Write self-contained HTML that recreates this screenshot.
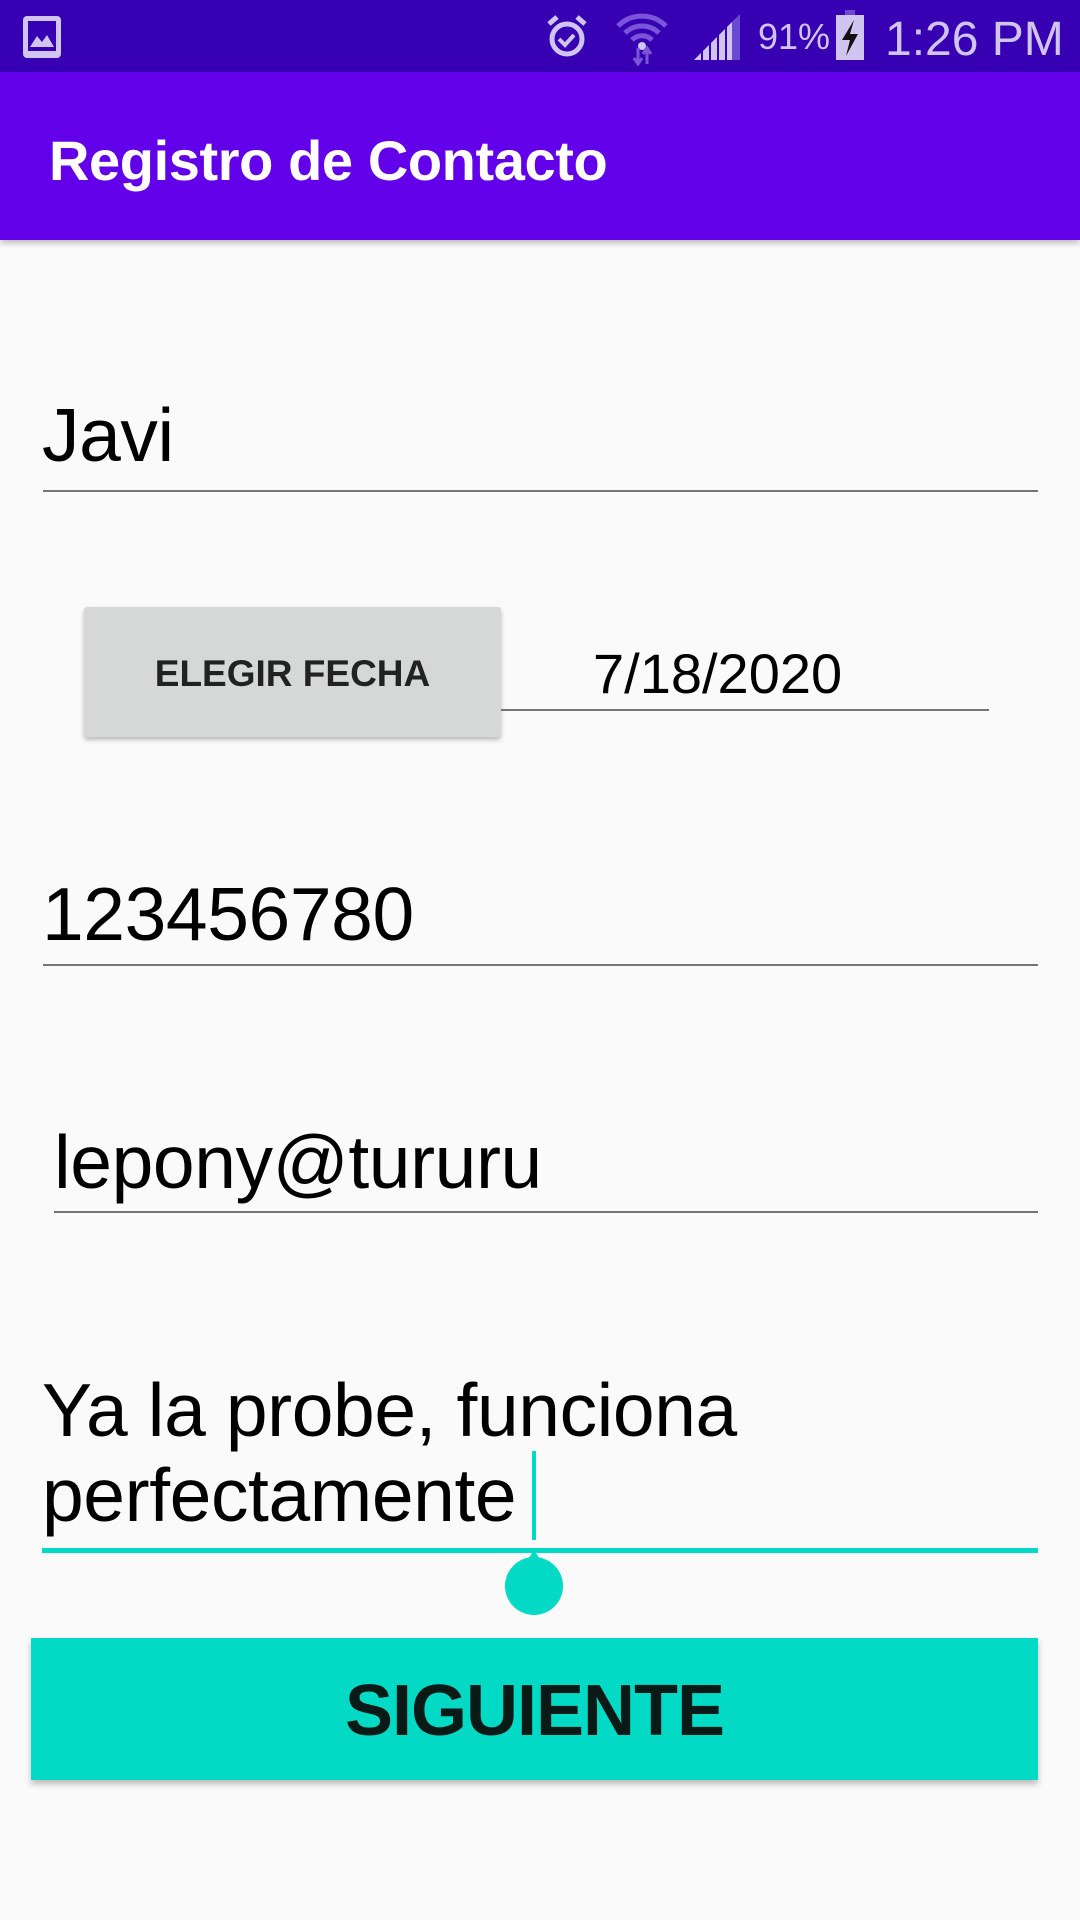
<!DOCTYPE html>
<html><head><meta charset="utf-8"><style>
*{margin:0;padding:0;box-sizing:border-box}
body{width:1080px;height:1920px;background:#fafafa;font-family:"Liberation Sans",sans-serif;position:relative;overflow:hidden}
.a{position:absolute}
.t{position:absolute;white-space:nowrap;color:#000;font-size:75px;line-height:1;letter-spacing:-0.4px}
.ul{position:absolute;height:2px;background:#757575}
</style></head><body>
<div class="a" style="left:0;top:0;width:1080px;height:72px;background:#3700b3"></div>
<svg class="a" style="left:20px;top:14px" width="44" height="46" viewBox="0 0 44 46"><rect x="3" y="2" width="38" height="42" rx="4" fill="#d0c4f0"/><rect x="8" y="7" width="28" height="30" fill="#3700b3"/><path d="M10 33 L17 22 L22 28 L27 21 L34 33Z" fill="#d0c4f0"/></svg>
<svg class="a" style="left:545px;top:12px" width="44" height="50" viewBox="0 0 44 50"><circle cx="22" cy="27" r="15" fill="none" stroke="#d0c4f0" stroke-width="5"/><path d="M14 27l6 6 9-10" fill="none" stroke="#d0c4f0" stroke-width="4"/><path d="M4 12l8-7M40 12l-8-7" stroke="#d0c4f0" stroke-width="5"/></svg>
<svg class="a" style="left:615px;top:8px" width="54" height="58" viewBox="0 0 54 58"><path d="M3 18a34 34 0 0 1 48 0M10 25a24 24 0 0 1 34 0M17 32a14 14 0 0 1 20 0" fill="none" stroke="#7a55d8" stroke-width="5"/><circle cx="27" cy="38" r="4" fill="#d0c4f0"/><path d="M23 40v16M19 50l4 6 4-6M32 56V42M28 46l4-6 4 6" stroke="#7a55d8" stroke-width="3" fill="none"/></svg>
<svg class="a" style="left:692px;top:12px" width="50" height="50" viewBox="0 0 50 50"><path d="M2 48 L48 2 V48Z" fill="#6a4ad0"/><path d="M2 48 L40 10 V48Z" fill="#d0c4f0"/><path d="M10 48V36M18 48V28M26 48V20M34 48V12" stroke="#3700b3" stroke-width="2"/></svg>
<div class="a" style="left:758px;top:16px;font-size:36px;color:#d0c4f0">91%</div>
<svg class="a" style="left:834px;top:10px" width="32" height="52" viewBox="0 0 32 52"><rect x="11" y="0" width="10" height="6" fill="#6a4ad0"/><rect x="2" y="5" width="28" height="45" fill="#d0c4f0"/><path d="M20 10 L8 30 H16 L12 46 L24 24 H16Z" fill="#111"/></svg>
<div class="a" style="left:885px;top:12px;font-size:48px;color:#d0c4f0">1:26 PM</div>
<div class="a" style="left:0;top:72px;width:1080px;height:168px;background:#6200ea;box-shadow:0 3px 6px rgba(0,0,0,.25)"></div>
<div class="a" style="left:49px;top:128px;font-size:56px;color:#fff;font-weight:bold;letter-spacing:-0.4px">Registro de Contacto</div>

<div class="t" style="left:42px;top:398px">Javi</div>
<div class="ul" style="left:43px;top:490px;width:995px"></div>

<div class="a" style="left:84px;top:607px;width:417px;height:130px;background:#d6d7d7;border-radius:3px;box-shadow:0 3px 5px rgba(0,0,0,.25);font-size:37px;font-weight:bold;color:#222;text-align:center;line-height:134px">ELEGIR FECHA</div>
<div class="t" style="left:593px;top:646px;font-size:56px;letter-spacing:0">7/18/2020</div>
<div class="ul" style="left:501px;top:709px;width:488px"></div>

<div class="t" style="left:42px;top:877px">123456780</div>
<div class="ul" style="left:43px;top:964px;width:995px"></div>

<div class="t" style="left:54px;top:1125px">lepony@tururu</div>
<div class="ul" style="left:54px;top:1211px;width:984px"></div>

<div class="t" style="left:42px;top:1373px">Ya la probe, funciona</div>
<div class="t" style="left:42px;top:1458px">perfectamente</div>
<div class="a" style="left:532px;top:1451px;width:4px;height:89px;background:#03dac5"></div>
<div class="a" style="left:42px;top:1548px;width:996px;height:5px;background:#03dac5"></div>
<svg class="a" style="left:504px;top:1550px" width="60" height="66" viewBox="0 0 60 66"><path d="M30 0 L48 28 A22 22 0 1 1 12 28Z" fill="#03dac5"/><circle cx="30" cy="36" r="29" fill="#03dac5"/></svg>

<div class="a" style="left:31px;top:1638px;width:1007px;height:142px;background:#03dac5;box-shadow:0 4px 6px rgba(0,0,0,.25);text-align:center;line-height:146px;font-size:72px;letter-spacing:-1px;font-weight:bold;color:#0a1a17">SIGUIENTE</div>
</body></html>
